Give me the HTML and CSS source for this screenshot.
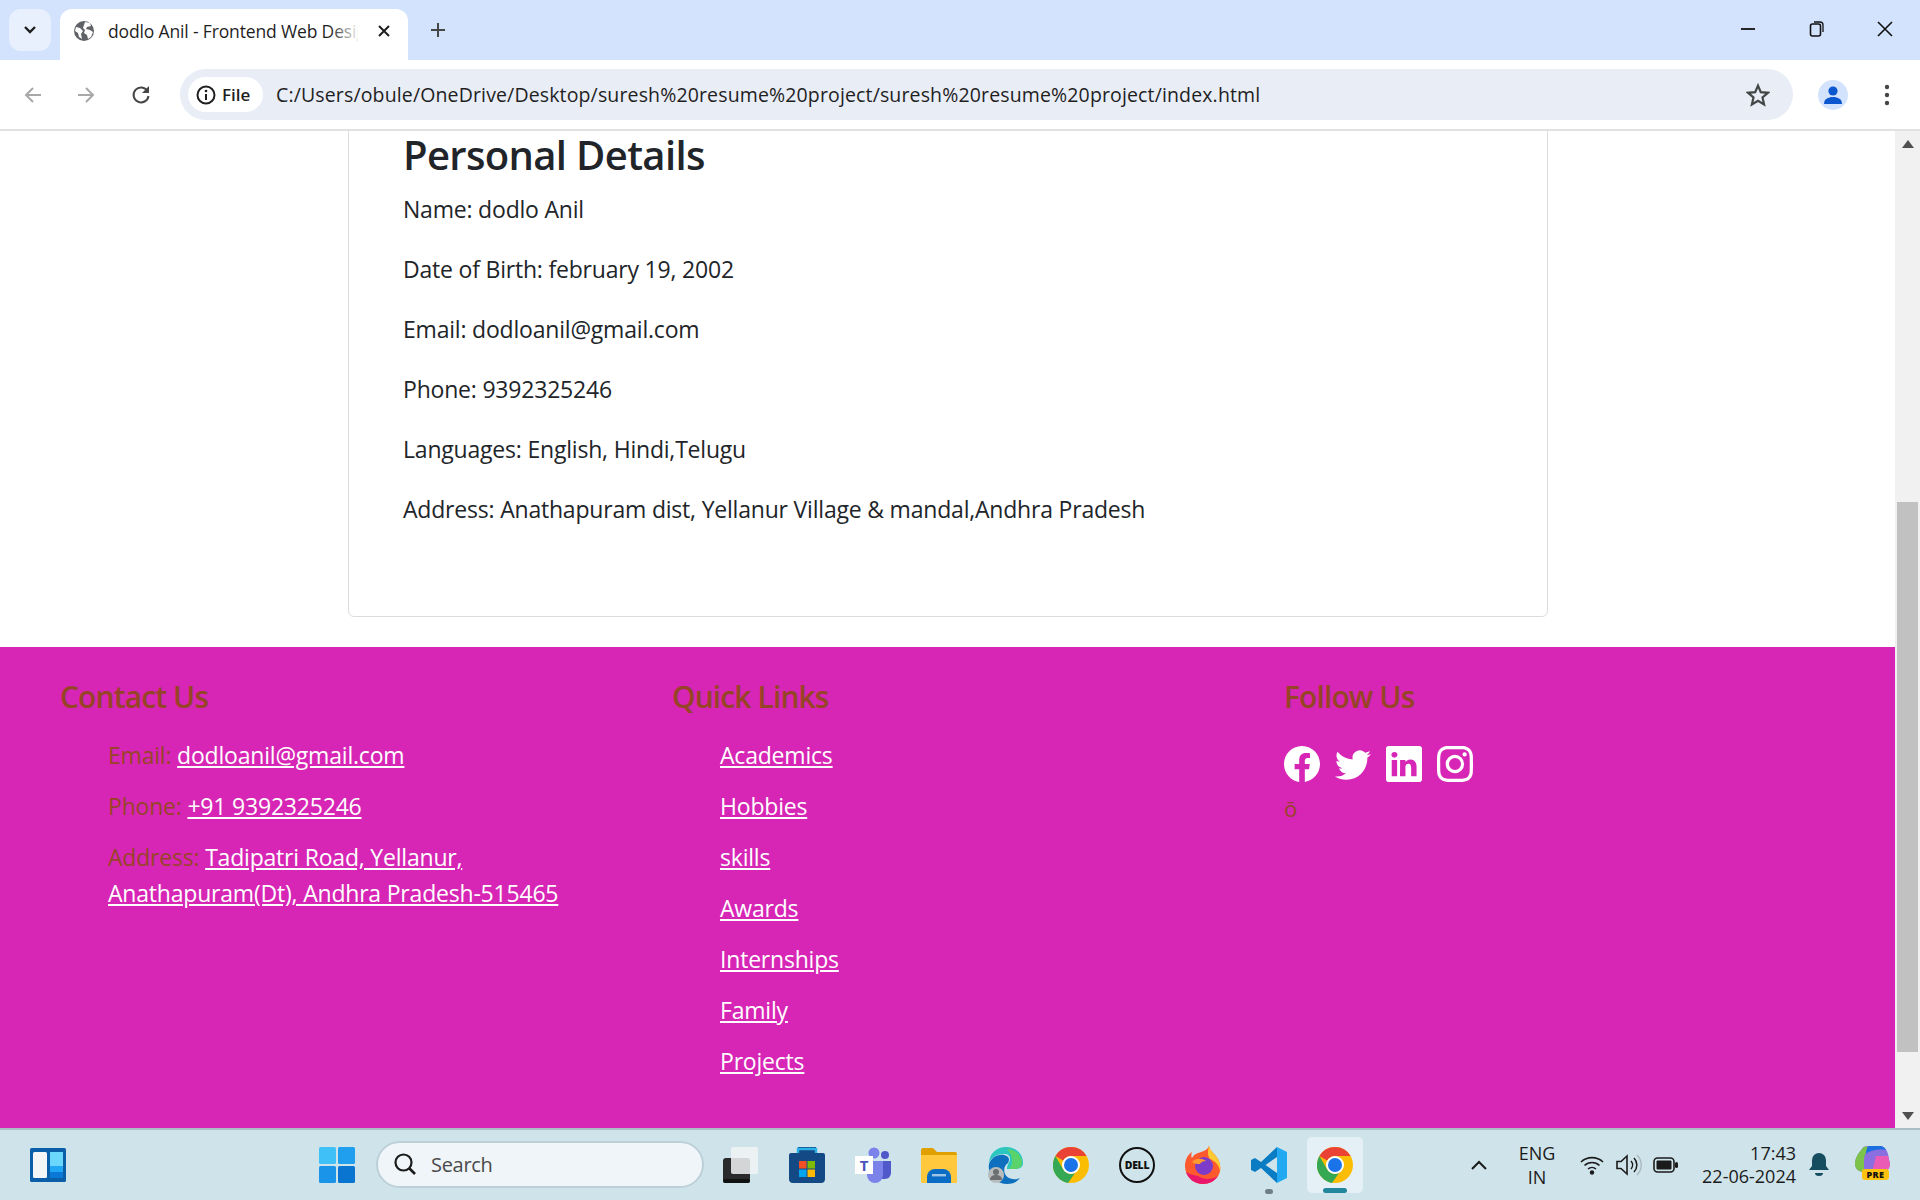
FILE: index.html
```html
<!DOCTYPE html>
<html lang="en">
<head>
<meta charset="utf-8">
<title>dodlo Anil - Frontend Web Designer</title>
<link rel="stylesheet" href="styles.css">
</head>
<body>
<div class="window">
  <header class="tabstrip">
    <div class="tab-toggle"><svg width="14" height="10" viewBox="0 0 14 10"><path d="M2 2l5 5 5-5" fill="none" stroke="#1f1f1f" stroke-width="2.4"/></svg></div>
    <div class="tab">
      <svg class="favicon" width="22" height="22" viewBox="0 0 22 22"><circle cx="11" cy="11" r="10" fill="#5f6368"/><path d="M3 7l4 1 3 3-2 3 1 5-3-2-1-4-3-2zM12 2l5 1 1 3-4 1-1 2 4 1 3 2-2 5-3 2-1-4-3-2 1-3-2-2 1-3z" fill="#fff"/></svg>
      <span class="tab-title">dodlo Anil - Frontend Web Designer</span>
      <span class="tab-fade"></span>
      <svg class="tab-close" width="14" height="14" viewBox="0 0 14 14"><path d="M2 2l10 10M12 2L2 12" stroke="#1f1f1f" stroke-width="2"/></svg>
    </div>
    <svg class="newtab" width="16" height="16" viewBox="0 0 16 16"><path d="M8 1v14M1 8h14" stroke="#444746" stroke-width="2"/></svg>
    <div class="winctl">
      <svg width="16" height="16" viewBox="0 0 16 16"><path d="M1 8h14" stroke="#111" stroke-width="1.8"/></svg>
      <svg width="16" height="18" viewBox="0 0 16 18"><rect x="1.5" y="4" width="10" height="12" rx="2" fill="none" stroke="#111" stroke-width="1.6"/><path d="M5 2h6a3 3 0 0 1 3 3v7" fill="none" stroke="#111" stroke-width="1.3"/></svg>
      <svg width="16" height="16" viewBox="0 0 16 16"><path d="M1 1l14 14M15 1L1 15" stroke="#111" stroke-width="1.6"/></svg>
    </div>
  </header>

  <nav class="toolbar">
    <svg class="nav-icon nav-back" width="20" height="20" viewBox="0 0 20 20"><path d="M18 10H3M10 3l-7 7 7 7" fill="none" stroke="#a8a8a8" stroke-width="2"/></svg>
    <svg class="nav-icon nav-fwd" width="20" height="20" viewBox="0 0 20 20"><path d="M2 10h15M10 3l7 7-7 7" fill="none" stroke="#a8a8a8" stroke-width="2"/></svg>
    <svg class="nav-icon nav-reload" width="20" height="20" viewBox="0 0 20 20"><path d="M16.5 6A7.5 7.5 0 1 0 17.5 11" fill="none" stroke="#444746" stroke-width="2"/><path d="M18 1v7h-7z" fill="#444746"/></svg>
    <div class="omnibox">
      <div class="chip">
        <svg width="20" height="20" viewBox="0 0 20 20"><circle cx="10" cy="10" r="8.5" fill="none" stroke="#1f1f1f" stroke-width="2"/><path d="M10 9v6" stroke="#1f1f1f" stroke-width="2"/><circle cx="10" cy="6" r="1.3" fill="#1f1f1f"/></svg>
        <span>File</span>
      </div>
      <span class="url">C:/Users/obule/OneDrive/Desktop/suresh%20resume%20project/suresh%20resume%20project/index.html</span>
      <svg class="star" width="24" height="24" viewBox="0 0 24 24"><path d="M12 2.6l2.8 6.6 7.1.6-5.4 4.7 1.6 7-6.1-3.7-6.1 3.7 1.6-7-5.4-4.7 7.1-.6z" fill="none" stroke="#444746" stroke-width="2.2"/></svg>
    </div>
    <div class="avatar"><svg width="30" height="30" viewBox="0 0 30 30"><circle cx="15" cy="15" r="15" fill="#d3e3fd"/><circle cx="15" cy="11" r="4.6" fill="#0b57d0"/><path d="M6 24c0-5 4-7 9-7s9 2 9 7z" fill="#0b57d0"/></svg></div>
    <svg class="menu-dots" width="6" height="24" viewBox="0 0 6 24"><circle cx="3" cy="4" r="2.2" fill="#444746"/><circle cx="3" cy="12" r="2.2" fill="#444746"/><circle cx="3" cy="20" r="2.2" fill="#444746"/></svg>
  </nav>

  <div class="viewport">
    <main class="page">
      <section class="container">
        <div class="card">
          <h2>Personal Details</h2>
          <p>Name: dodlo Anil</p>
          <p>Date of Birth: february 19, 2002</p>
          <p>Email: dodloanil@gmail.com</p>
          <p>Phone: 9392325246</p>
          <p>Languages: English, Hindi,Telugu</p>
          <p>Address: Anathapuram dist, Yellanur Village &amp; mandal,Andhra Pradesh</p>
        </div>
      </section>
      <footer class="footer">
        <div class="fcol">
          <h4>Contact Us</h4>
          <ul>
            <li>Email: <a href="#">dodloanil@gmail.com</a></li>
            <li>Phone: <a href="#">+91 9392325246</a></li>
            <li>Address: <a href="#">Tadipatri Road, Yellanur, Anathapuram(Dt), Andhra Pradesh-515465</a></li>
          </ul>
        </div>
        <div class="fcol">
          <h4>Quick Links</h4>
          <ul>
            <li><a href="#">Academics</a></li>
            <li><a href="#">Hobbies</a></li>
            <li><a href="#">skills</a></li>
            <li><a href="#">Awards</a></li>
            <li><a href="#">Internships</a></li>
            <li><a href="#">Family</a></li>
            <li><a href="#">Projects</a></li>
          </ul>
        </div>
        <div class="fcol">
          <h4>Follow Us</h4>
          <div class="social">
            <svg viewBox="0 0 16 16"><path d="M16 8.049c0-4.446-3.582-8.05-8-8.05C3.58 0-.002 3.603-.002 8.05c0 4.017 2.926 7.347 6.75 7.951v-5.625h-2.03V8.05H6.75V6.275c0-2.017 1.195-3.131 3.022-3.131.876 0 1.791.157 1.791.157v1.98h-1.009c-.993 0-1.303.621-1.303 1.258v1.51h2.218l-.354 2.326H9.25V16c3.824-.604 6.75-3.934 6.75-7.951"/></svg>
            <svg viewBox="0 0 16 16"><path d="M5.026 15c6.038 0 9.341-5.003 9.341-9.334q.002-.211-.006-.422A6.7 6.7 0 0 0 16 3.542a6.7 6.7 0 0 1-1.889.518 3.3 3.3 0 0 0 1.447-1.817 6.5 6.5 0 0 1-2.087.793A3.286 3.286 0 0 0 7.875 6.03a9.32 9.32 0 0 1-6.767-3.429 3.29 3.29 0 0 0 1.018 4.382A3.3 3.3 0 0 1 .64 6.575v.045a3.29 3.29 0 0 0 2.632 3.218 3.2 3.2 0 0 1-.865.115 3 3 0 0 1-.614-.057 3.28 3.28 0 0 0 3.067 2.277A6.6 6.6 0 0 1 .78 13.58a6 6 0 0 1-.78-.045A9.34 9.34 0 0 0 5.026 15"/></svg>
            <svg viewBox="0 0 16 16"><path d="M0 1.146C0 .513.526 0 1.175 0h13.65C15.474 0 16 .513 16 1.146v13.708c0 .633-.526 1.146-1.175 1.146H1.175C.526 16 0 15.487 0 14.854zm4.943 12.248V6.169H2.542v7.225zm-1.2-8.212c.837 0 1.358-.554 1.358-1.248-.015-.709-.52-1.248-1.342-1.248S2.4 3.226 2.4 3.934c0 .694.521 1.248 1.327 1.248zm4.908 8.212V9.359c0-.216.016-.432.08-.586.173-.431.568-.878 1.232-.878.869 0 1.216.662 1.216 1.634v3.865h2.401V9.25c0-2.22-1.184-3.252-2.764-3.252-1.274 0-1.845.7-2.165 1.193v.025h-.016l.016-.025V6.169h-2.4c.03.678 0 7.225 0 7.225z"/></svg>
            <svg viewBox="0 0 16 16"><path d="M8 0C5.829 0 5.556.01 4.703.048 3.85.088 3.269.222 2.76.42a3.9 3.9 0 0 0-1.417.923A3.9 3.9 0 0 0 .42 2.76C.222 3.268.087 3.85.048 4.7.01 5.555 0 5.827 0 8.001c0 2.172.01 2.444.048 3.297.04.852.174 1.433.372 1.942.205.526.478.972.923 1.417.444.445.89.719 1.416.923.51.198 1.09.333 1.942.372C5.555 15.99 5.827 16 8 16s2.444-.01 3.298-.048c.851-.04 1.434-.174 1.943-.372a3.9 3.9 0 0 0 1.416-.923c.445-.445.718-.891.923-1.417.197-.509.332-1.09.372-1.942C15.99 10.445 16 10.173 16 8s-.01-2.445-.048-3.299c-.04-.851-.175-1.433-.372-1.941a3.9 3.9 0 0 0-.923-1.417A3.9 3.9 0 0 0 13.24.42c-.51-.198-1.092-.333-1.943-.372C10.443.01 10.172 0 7.998 0zm-.717 1.442h.718c2.136 0 2.389.007 3.232.046.78.035 1.204.166 1.486.275.373.145.64.319.92.599s.453.546.598.92c.11.281.24.705.275 1.485.039.843.047 1.096.047 3.231s-.008 2.389-.047 3.232c-.035.78-.166 1.203-.275 1.485a2.5 2.5 0 0 1-.599.919c-.28.28-.546.453-.92.598-.28.11-.704.24-1.485.276-.843.038-1.096.047-3.232.047s-2.39-.009-3.233-.047c-.78-.036-1.203-.166-1.485-.276a2.5 2.5 0 0 1-.92-.598 2.5 2.5 0 0 1-.6-.92c-.109-.281-.24-.705-.275-1.485-.038-.843-.046-1.096-.046-3.233s.008-2.388.046-3.231c.036-.78.166-1.204.276-1.486.145-.373.319-.64.599-.92s.546-.453.92-.598c.282-.11.705-.24 1.485-.276.738-.034 1.024-.044 2.515-.045zm4.988 1.328a.96.96 0 1 0 0 1.92.96.96 0 0 0 0-1.92m-4.27 1.122a4.109 4.109 0 1 0 0 8.217 4.109 4.109 0 0 0 0-8.217m0 1.441a2.667 2.667 0 1 1 0 5.334 2.667 2.667 0 0 1 0-5.334"/></svg>
          </div>
          <p class="stray">ō</p>
        </div>
      </footer>
    </main>
    <aside class="scrollbar">
      <div class="sb-btn"><svg width="12" height="8" viewBox="0 0 12 8"><path d="M6 0l6 8H0z" fill="#505050"/></svg></div>
      <div class="sb-track"><div class="sb-thumb"></div></div>
      <div class="sb-btn"><svg width="12" height="8" viewBox="0 0 12 8"><path d="M6 8l6-8H0z" fill="#505050"/></svg></div>
    </aside>
  </div>

  <footer class="taskbar">
    <svg class="widgets" width="36" height="34" viewBox="0 0 36 34"><rect width="36" height="34" rx="1.5" fill="#0a5fa8"/><rect x="3" y="4" width="14" height="26" rx="1.5" fill="#f3f5f6"/><rect x="20" y="4" width="13" height="14" fill="#6bd7fd"/><rect x="20" y="18" width="13" height="6" fill="#20a6f5"/><rect x="20" y="24" width="13" height="6" fill="#0a78d6"/></svg>
    <svg class="start" width="36" height="36" viewBox="0 0 36 36"><rect width="17" height="17" rx="1.5" fill="#3fc0f7"/><rect x="19" width="17" height="17" rx="1.5" fill="#1f9fed"/><rect y="19" width="17" height="17" rx="1.5" fill="#1a94e8"/><rect x="19" y="19" width="17" height="17" rx="1.5" fill="#0a75d1"/></svg>
    <div class="search">
      <svg width="26" height="26" viewBox="0 0 26 26"><circle cx="11.5" cy="11.5" r="8" fill="none" stroke="#1c1c1c" stroke-width="2.2"/><path d="M17 17l6 6" stroke="#1c1c1c" stroke-width="2.6"/></svg>
      <span>Search</span>
    </div>
    <div class="apps">
      <div class="app"><svg width="36" height="36" viewBox="0 0 36 36"><rect x="0" y="11" width="27" height="25" rx="3" fill="#2a2a2a"/><rect x="0" y="32" width="27" height="4" rx="2" fill="#111"/><rect x="8" y="0" width="27" height="27" rx="2" fill="#f1f3f4" fill-opacity=".85"/></svg></div>
      <div class="app"><svg width="36" height="36" viewBox="0 0 36 36"><path d="M9 0h18v6h7a2 2 0 0 1 2 2v24a4 4 0 0 1-4 4H4a4 4 0 0 1-4-4V8a2 2 0 0 1 2-2h6z" fill="#134a85"/><path d="M9 6V2h18v4" fill="none" stroke="#2bb1e8" stroke-width="2.4"/><rect x="10" y="14" width="7.5" height="7.5" fill="#f25022"/><rect x="18.5" y="14" width="7.5" height="7.5" fill="#7fba00"/><rect x="10" y="22.5" width="7.5" height="7.5" fill="#00a4ef"/><rect x="18.5" y="22.5" width="7.5" height="7.5" fill="#ffb900"/></svg></div>
      <div class="app"><div class="teams"><svg width="36" height="36" viewBox="0 0 36 36"><circle cx="19" cy="6" r="5.5" fill="#7b83eb"/><circle cx="30" cy="8" r="4" fill="#5059c9"/><path d="M24 14h12v12a6 6 0 0 1-6 6h-6z" fill="#5059c9"/><path d="M10 14h18v14a8 8 0 0 1-16 0z" fill="#7b83eb"/><rect x="0" y="9" width="18" height="18" fill="#fff"/></svg><span class="teams-t">T</span></div></div>
      <div class="app"><svg width="36" height="36" viewBox="0 0 36 36"><path d="M0 3a2 2 0 0 1 2-2h10l4 4h18a2 2 0 0 1 2 2v6H0z" fill="#e0a100"/><path d="M0 8h36v27a1 1 0 0 1-1 1H1a1 1 0 0 1-1-1z" fill="#ffc83d"/><path d="M6 36v-6a8 8 0 0 1 8-8h8a8 8 0 0 1 8 8v6z" fill="#0a6cc4"/><rect x="11" y="27" width="14" height="2.4" fill="#fff" fill-opacity=".6"/></svg></div>
      <div class="app"><svg width="36" height="38" viewBox="0 0 36 38"><path d="M2 18C2 7 10 1 19 1c10 0 17 7 17 16 0 4-3 6-8 6h-8c0-5 3-7 3-10 0-3-2-5-6-5-8 0-15 5-15 10z" fill="#2bc6c0"/><path d="M20 3c8 0 15 6 15 14 0 4-3 6-8 6h-5c2-3 3-5 3-8 0-5-2-9-5-12z" fill="#59d36a"/><path d="M2 18c2-6 8-10 15-9 5 1 6 4 4 8-3 2-5 6-3 11 2 4 8 7 15 4-3 4-8 6-13 6C10 38 0 30 2 18z" fill="#0d6fbd"/><circle cx="9" cy="29" r="8" fill="#b9bcbc"/><circle cx="9" cy="26" r="3" fill="#6d7070"/><path d="M3 34c0-4 3-5 6-5s6 1 6 5z" fill="#6d7070"/></svg></div>
      <div class="app"><svg width="36" height="36" viewBox="-18 -18 36 36"><use href="#chrome-logo"/></svg></div>
      <div class="app"><div class="dell"><span>DELL</span></div></div>
      <div class="app"><svg width="36" height="38" viewBox="0 0 36 38"><path d="M24 0c1 5 6 8 9 13 3 6 3 13 0 17-3 5-9 8-15 8C8 38 0 30 0 20 0 14 3 8 7 6c-1 3-1 5 0 6 2-4 6-5 9-6 4-1 7-3 8-6z" fill="#ff5a2e"/><path d="M24 0c1 5 6 8 9 13 2 4 3 8 2 12-1-6-5-10-10-12-3-4-2-9-1-13z" fill="#ffc933"/><path d="M1 26c2 7 9 12 17 12 6 0 12-3 15-8-6 4-14 4-20 0-5-1-9-2-12-4z" fill="#e9176c"/><circle cx="19" cy="20" r="9" fill="#7c3bc8"/><path d="M7 16c4-4 10-4 14-1-3 0-5 1-6 3-3 0-6 0-8-2z" fill="#ff9a2e"/></svg></div>
      <div class="app app-pinned"><svg width="36" height="36" viewBox="0 0 36 36"><path d="M26 0l10 5v26l-10 5V0z" fill="#23a9f2"/><path d="M26 0L10 15l-6-4-4 2v10l4 2 6-4 16 15v-10L14.500 18 26 10z" fill="#0a7cc4"/></svg></div>
      <div class="app app-active"><svg width="36" height="36" viewBox="-18 -18 36 36"><use href="#chrome-logo"/></svg></div>
    </div>
    <div class="tray">
      <svg class="chev" width="18" height="12" viewBox="0 0 18 12"><path d="M2 10l7-7 7 7" fill="none" stroke="#1b1b1b" stroke-width="2"/></svg>
      <div class="lang"><span>ENG</span><span>IN</span></div>
      <svg class="wifi" width="26" height="20" viewBox="0 0 26 20"><path d="M2 7a16 16 0 0 1 22 0M5.500 10.500a11 11 0 0 1 15 0M9 14a6 6 0 0 1 8 0" fill="none" stroke="#1b1b1b" stroke-width="1.6"/><circle cx="13" cy="17.500" r="2.200" fill="#1b1b1b"/></svg>
      <svg class="vol" width="26" height="22" viewBox="0 0 26 22"><path d="M1 7.500h4L11 2v18l-6-5.500H1z" fill="none" stroke="#1b1b1b" stroke-width="1.6"/><path d="M15 7a6 6 0 0 1 0 8M18 4a10 10 0 0 1 0 14" fill="none" stroke="#1b1b1b" stroke-width="1.5"/><path d="M21 1a14 14 0 0 1 0 20" fill="none" stroke="#a8b8bd" stroke-width="1.3"/></svg>
      <svg class="batt" width="25" height="16" viewBox="0 0 25 16"><rect x="1" y="1" width="20" height="14" rx="3.500" fill="none" stroke="#1b1b1b" stroke-width="1.6"/><rect x="3.500" y="3.500" width="15" height="9" rx="1" fill="#1b1b1b"/><rect x="22" y="5" width="3" height="6" rx="1.500" fill="#1b1b1b"/></svg>
      <div class="clock"><span>17:43</span><span>22-06-2024</span></div>
      <svg class="bell" width="20" height="24" viewBox="0 0 20 24"><path d="M10 0a7 7 0 0 1 7 7v6l3 4H0l3-4V7a7 7 0 0 1 7-7z" fill="#164e5f"/><path d="M6 20h8a4 3 0 0 1-8 0z" fill="#164e5f"/></svg>
      <div class="copilot">
        <svg width="36" height="30" viewBox="0 0 36 30"><path d="M8 3c2-3 4-3 7-3h11c4 0 7 4 8 8l2 10c0 5-4 8-8 8H10c-5 0-9-3-9-8 0-6 3-10 7-15z" fill="#8a6fe0"/><path d="M1 18C1 12 4 8 8 3c2-3 5-3 7-1-3 3-5 8-5 12v12C5 26 1 23 1 18z" fill="#7cc34a"/><path d="M15 0h11c3 0 5 2 6 4-4-1-14-1-20 4 0-4 1-7 3-8z" fill="#1b6fe0"/><path d="M22 10h12l2 8c0 5-4 8-8 8H18z" fill="#ea5bb5"/></svg>
        <span class="pre">PRE</span>
      </div>
    </div>
  </footer>
</div>
<svg class="defs" width="0" height="0"><defs><g id="chrome-logo"><circle r="18" fill="#fbbc04"/><path d="M0-18A18 18 0 0 1 15.6-9H0a9 9 0 0 0-7.8 4.5L-15.6-9A18 18 0 0 1 0-18z" fill="#ea4335"/><path d="M-15.6-9L-7.8 4.5A9 9 0 0 0 4 7.9L-3 18A18 18 0 0 1-15.6-9z" fill="#34a853"/><circle r="9" fill="#fff"/><circle r="7" fill="#1a73e8"/></g></defs></svg>
</body>
</html>
```
FILE: styles.css
```css
* { box-sizing: border-box; }
html, body { margin: 0; height: 1200px; overflow: hidden; }
body { font-family: "Open Sans", "Noto Sans", sans-serif; color: #212529; }
.defs { position: absolute; }
.window { display: flex; flex-direction: column; height: 1200px; width: 1920px; }

.tabstrip { height: 60px; background: #d3e3fd; display: flex; align-items: flex-start; flex: none; }
.tab-toggle { width: 42px; height: 42px; margin: 9px 0 0 9px; border-radius: 12px; background: #e9f0fd; display: flex; align-items: center; justify-content: center; }
.tab { position: relative; width: 348px; height: 51px; margin: 9px 0 0 9px; background: #fff; border-radius: 12px 12px 0 0; display: flex; align-items: center; padding: 0 17px 8px 13px; }
.favicon { flex: none; }
.tab-title { margin-left: 13px; width: 250px; white-space: nowrap; overflow: hidden; font-size: 17.5px; letter-spacing: -.15px; color: #1f1f1f; }
.tab-fade { position: absolute; left: 270px; top: 0; width: 30px; height: 42px; background: linear-gradient(90deg, rgba(255,255,255,0), #fff); }
.tab-close { flex: none; margin-left: auto; }
.newtab { margin: 22px 0 0 22px; flex: none; }
.winctl { margin-left: auto; display: flex; align-items: center; gap: 52.500px; padding: 20px 27px 0 0; }

.toolbar { height: 71px; flex: none; background: #fff; border-bottom: 2px solid #e1e1e1; display: flex; align-items: center; padding: 0 0 0 23px; border-radius: 12px 12px 0 0; }
.nav-fwd { margin-left: 33px; }
.nav-reload { margin-left: 35px; }
.omnibox { margin-left: 29px; width: 1613px; height: 51px; background: #e9edf6; border-radius: 26px; display: flex; align-items: center; padding: 0 23px 0 8px; }
.chip { height: 35px; width: 75px; border-radius: 18px; background: #fff; display: flex; align-items: center; padding-left: 8px; gap: 6px; font-size: 17px; font-weight: 600; color: #1f1f1f; }
.url { margin-left: 13px; font-size: 19.500px; letter-spacing: .14px; line-height: 26px; color: #1f1f1f; white-space: nowrap; }
.star { margin-left: auto; }
.avatar { margin-left: 25px; width: 30px; height: 30px; display: flex; }
.menu-dots { margin-left: 36px; }

.viewport { flex: 1; min-height: 0; display: flex; }
.page { flex: 1; min-width: 0; overflow: hidden; display: flex; flex-direction: column; }
.container { flex: none; height: 516px; padding: 0 347px 0 348px; }
.card { height: 506px; margin-top: -20px; border: 1px solid #dcdcdc; border-radius: 6px; padding: 19px 54px 0; }
.card h2 { margin: 0 0 12px; font-size: 40px; line-height: 48px; font-weight: 600; letter-spacing: -.65px; }
.card p { margin: 0 0 24px; font-size: 23px; line-height: 36px; letter-spacing: -.2px; }

.footer { flex: 1; background: #d726b6; display: grid; grid-template-columns: repeat(3, 612px); padding: 30px 0 0 60px; color: #964426; }
.fcol h4 { margin: 0 0 20px; font-size: 30px; line-height: 40px; font-weight: 600; letter-spacing: -.9px; }
.fcol ul { margin: 0; padding: 0 0 0 48px; list-style: none; }
.fcol li { font-size: 23px; line-height: 36px; letter-spacing: -.2px; margin-bottom: 15px; }
.fcol:first-child li:last-child { width: 480px; }
.fcol a { color: #fff; text-decoration: underline; }
.social { display: flex; gap: 15px; padding-top: 9px; }
.social svg { width: 36px; height: 36px; fill: #fff; }
.stray { margin: 11px 0 0; font-size: 22px; line-height: 30px; }

.scrollbar { width: 25px; flex: none; background: #f1f1f1; display: flex; flex-direction: column; }
.sb-btn { height: 25px; display: flex; align-items: center; justify-content: center; flex: none; }
.sb-track { flex: 1; padding: 346px 2px 51px; }
.sb-thumb { height: 100%; background: #c1c1c1; }

.taskbar { height: 72px; flex: none; background: #cfe4ea; border-top: 2px solid #a9bfc6; display: flex; align-items: center; padding-left: 30px; position: relative; font-family: "Open Sans", sans-serif; }
.start { margin-left: 253px; flex: none; }
.search { margin: 0 0 2px 21px; width: 328px; height: 47px; border-radius: 24px; background: #eff5f8; border: 2px solid #bdd0d8; display: flex; align-items: center; padding-left: 14px; gap: 13px; font-size: 20px; letter-spacing: -.3px; color: #4a4a4a; flex: none; }
.apps { display: flex; margin-left: 4px; flex: none; }
.app { width: 66px; height: 56px; display: flex; align-items: center; justify-content: center; position: relative; }
.app-pinned::after { content: ""; position: absolute; left: 29px; bottom: -1px; width: 8px; height: 5px; border-radius: 3px; background: #6f7f85; }
.app-active { background: #e4f0f5; border-radius: 5px; width: 56px; margin-left: 5px; }
.app-active::after { content: ""; position: absolute; left: 16px; bottom: 0; width: 24px; height: 5px; border-radius: 3px; background: #22879c; }
.teams { position: relative; width: 36px; height: 36px; }
.teams svg { display: block; }
.teams-t { position: absolute; left: 0; top: 9px; width: 18px; text-align: center; font-size: 15px; line-height: 18px; font-weight: 700; color: #4b53bc; }
.dell { width: 36px; height: 36px; border: 2px solid #111; border-radius: 50%; display: flex; align-items: center; justify-content: center; }
.dell span { font-size: 10.500px; font-weight: 800; color: #111; letter-spacing: -.3px; }

.tray { position: absolute; left: 1470px; top: 0; right: 0; height: 70px; display: flex; align-items: center; color: #1b1b1b; }
.chev { flex: none; }
.lang { margin-left: 19px; width: 60px; display: flex; flex-direction: column; align-items: center; font-size: 18px; line-height: 24px; }
.wifi { margin-left: 12px; }
.vol { margin-left: 11px; }
.batt { margin-left: 11px; }
.clock { width: 118px; display: flex; flex-direction: column; align-items: flex-end; font-size: 18px; line-height: 23px; }
.bell { margin-left: 13px; }
.copilot { margin-left: 25px; position: relative; width: 36px; height: 38px; }
.copilot svg { display: block; }
.pre { position: absolute; left: 8px; top: 23px; width: 27px; height: 11px; border-radius: 3px; background: #ffc20e; color: #111; font-size: 9px; line-height: 11px; font-weight: 800; text-align: center; letter-spacing: .4px; }
```
